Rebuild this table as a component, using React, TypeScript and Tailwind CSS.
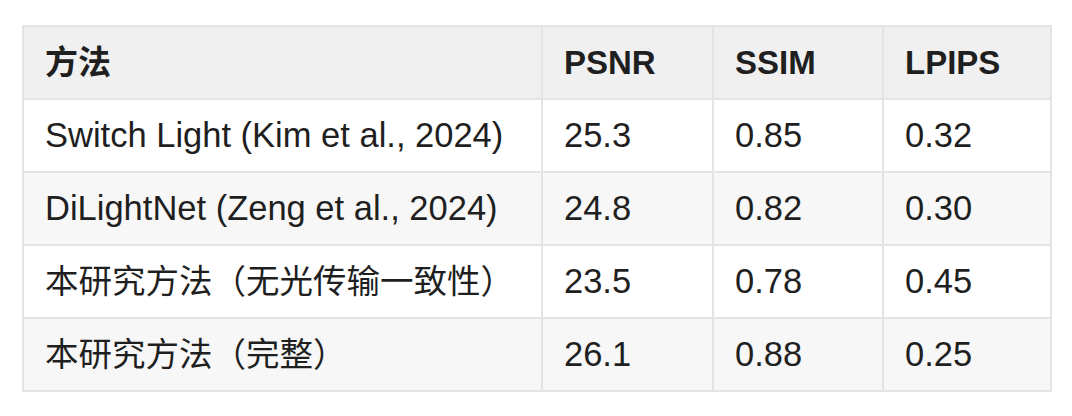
import React from "react";

const rows = [
  ["Switch Light (Kim et al., 2024)", "25.3", "0.85", "0.32"],
  ["DiLightNet (Zeng et al., 2024)", "24.8", "0.82", "0.30"],
  ["本研究方法（无光传输一致性）", "23.5", "0.78", "0.45"],
  ["本研究方法（完整）", "26.1", "0.88", "0.25"],
];

const isCJK = (s: string) => /[\u4e00-\u9fff]/.test(s);

export default function App() {
  return (
    <div
      className="w-[1072px] h-[416px] bg-white pt-[25px] pl-[22px] text-[#1f1f1f]"
      style={{ fontFamily: '"Liberation Sans", "Noto Sans CJK SC", sans-serif' }}
    >
      <table className="border-collapse border-2 border-[#e4e4e4] w-[1028px] table-fixed leading-[45px]">
        <colgroup>
          <col className="w-[519px]" />
          <col className="w-[171px]" />
          <col className="w-[170px]" />
          <col className="w-[168px]" />
        </colgroup>
        <thead>
          <tr className="bg-[#f0f0f0]">
            {["方法", "PSNR", "SSIM", "LPIPS"].map((h) => (
              <th
                key={h}
                className={`border-2 border-[#e4e4e4] text-left font-bold px-[21px] py-[13px] ${
                  isCJK(h) ? "text-[33px]" : "text-[33px]"
                }`}
              >
                {h}
              </th>
            ))}
          </tr>
        </thead>
        <tbody>
          {rows.map((r, i) => (
            <tr key={i} className={i % 2 === 1 ? "bg-[#f7f7f7]" : "bg-white"}>
              {r.map((c, j) => (
                <td
                  key={j}
                  className={`border-2 border-[#e4e4e4] text-left px-[21px] py-[13px] whitespace-nowrap ${
                    isCJK(c) ? "text-[33.5px]" : "text-[34.5px]"
                  }`}
                >
                  {c}
                </td>
              ))}
            </tr>
          ))}
        </tbody>
      </table>
    </div>
  );
}
